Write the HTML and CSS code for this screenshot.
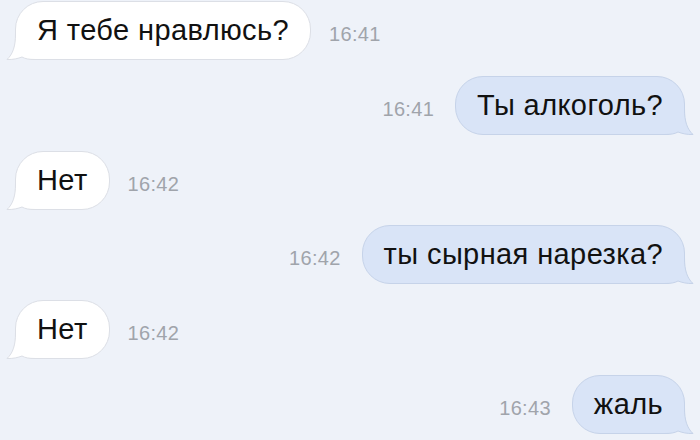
FILE: index.html
```html
<!DOCTYPE html>
<html lang="ru">
<head>
<meta charset="utf-8">
<title>Чат</title>
<link rel="stylesheet" href="styles.css">
</head>
<body>
<div class="chat">
  <div class="row in">
    <div class="bubble">Я тебе нравлюсь?<svg class="tail" viewBox="0 0 32 28"><path class="f" d="M9.5 0 L9.5 2 C9.5 14 7 22 1 27.5 C7 27.8 12 26.5 16 25 C19 26.8 23 27.5 29 27.5 L32 27.5 L32 0 Z"/><path class="s" d="M9.5 -1 L9.5 2 C9.5 14 7 22 1 27.5 C7 27.8 12 26.5 16 25 C19 26.8 23 27.5 29 27.5 L32 27.5"/></svg></div>
    <span class="time">16:41</span>
  </div>
  <div class="row out">
    <span class="time">16:41</span>
    <div class="bubble">Ты алкоголь?<svg class="tail" viewBox="0 0 32 28"><path class="f" d="M9.5 0 L9.5 2 C9.5 14 7 22 1 27.5 C7 27.8 12 26.5 16 25 C19 26.8 23 27.5 29 27.5 L32 27.5 L32 0 Z"/><path class="s" d="M9.5 -1 L9.5 2 C9.5 14 7 22 1 27.5 C7 27.8 12 26.5 16 25 C19 26.8 23 27.5 29 27.5 L32 27.5"/></svg></div>
  </div>
  <div class="row in">
    <div class="bubble">Нет<svg class="tail" viewBox="0 0 32 28"><path class="f" d="M9.5 0 L9.5 2 C9.5 14 7 22 1 27.5 C7 27.8 12 26.5 16 25 C19 26.8 23 27.5 29 27.5 L32 27.5 L32 0 Z"/><path class="s" d="M9.5 -1 L9.5 2 C9.5 14 7 22 1 27.5 C7 27.8 12 26.5 16 25 C19 26.8 23 27.5 29 27.5 L32 27.5"/></svg></div>
    <span class="time">16:42</span>
  </div>
  <div class="row out">
    <span class="time">16:42</span>
    <div class="bubble">ты сырная нарезка?<svg class="tail" viewBox="0 0 32 28"><path class="f" d="M9.5 0 L9.5 2 C9.5 14 7 22 1 27.5 C7 27.8 12 26.5 16 25 C19 26.8 23 27.5 29 27.5 L32 27.5 L32 0 Z"/><path class="s" d="M9.5 -1 L9.5 2 C9.5 14 7 22 1 27.5 C7 27.8 12 26.5 16 25 C19 26.8 23 27.5 29 27.5 L32 27.5"/></svg></div>
  </div>
  <div class="row in">
    <div class="bubble">Нет<svg class="tail" viewBox="0 0 32 28"><path class="f" d="M9.5 0 L9.5 2 C9.5 14 7 22 1 27.5 C7 27.8 12 26.5 16 25 C19 26.8 23 27.5 29 27.5 L32 27.5 L32 0 Z"/><path class="s" d="M9.5 -1 L9.5 2 C9.5 14 7 22 1 27.5 C7 27.8 12 26.5 16 25 C19 26.8 23 27.5 29 27.5 L32 27.5"/></svg></div>
    <span class="time">16:42</span>
  </div>
  <div class="row out">
    <span class="time">16:43</span>
    <div class="bubble">жаль<svg class="tail" viewBox="0 0 32 28"><path class="f" d="M9.5 0 L9.5 2 C9.5 14 7 22 1 27.5 C7 27.8 12 26.5 16 25 C19 26.8 23 27.5 29 27.5 L32 27.5 L32 0 Z"/><path class="s" d="M9.5 -1 L9.5 2 C9.5 14 7 22 1 27.5 C7 27.8 12 26.5 16 25 C19 26.8 23 27.5 29 27.5 L32 27.5"/></svg></div>
  </div>
</div>
</body>
</html>
```
FILE: styles.css
```css
html, body {
  margin: 0;
  padding: 0;
}
body {
  background: #eef2f9;
  width: 700px;
  height: 440px;
  overflow: hidden;
  font-family: "Liberation Sans", Arial, sans-serif;
}
.chat {
  display: flex;
  flex-direction: column;
  gap: 15.8px;
  padding: 1px 15px 0;
}
.row {
  display: flex;
  align-items: flex-start;
  gap: 18px;
}
.row.out {
  justify-content: flex-end;
  gap: 21px;
}
.bubble {
  position: relative;
  box-sizing: border-box;
  height: 59px;
  padding: 12px 21px;
  font-size: 29px;
  line-height: 33px;
  letter-spacing: 0.4px;
  color: #111;
  background: #fff;
  border: 1px solid #dcdfe6;
  border-radius: 28px;
  white-space: nowrap;
}
.in .bubble {
  border-bottom-left-radius: 20px;
}
.out .bubble {
  background: #d9e4f7;
  border-color: #c6d3e9;
  border-bottom-right-radius: 20px;
}
.tail {
  position: absolute;
  bottom: -1px;
  left: -10px;
  width: 32px;
  height: 28px;
  overflow: visible;
}
.out .tail {
  left: auto;
  right: -10px;
  transform: scaleX(-1);
}
.tail .f {
  fill: #fff;
}
.tail .s {
  fill: none;
  stroke: #dcdfe6;
  stroke-width: 1;
}
.out .tail .f {
  fill: #d9e4f7;
}
.out .tail .s {
  stroke: #c6d3e9;
}
.time {
  margin-top: 22px;
  font-size: 20px;
  line-height: 23px;
  letter-spacing: 0.3px;
  color: #a0a4ab;
}
```
